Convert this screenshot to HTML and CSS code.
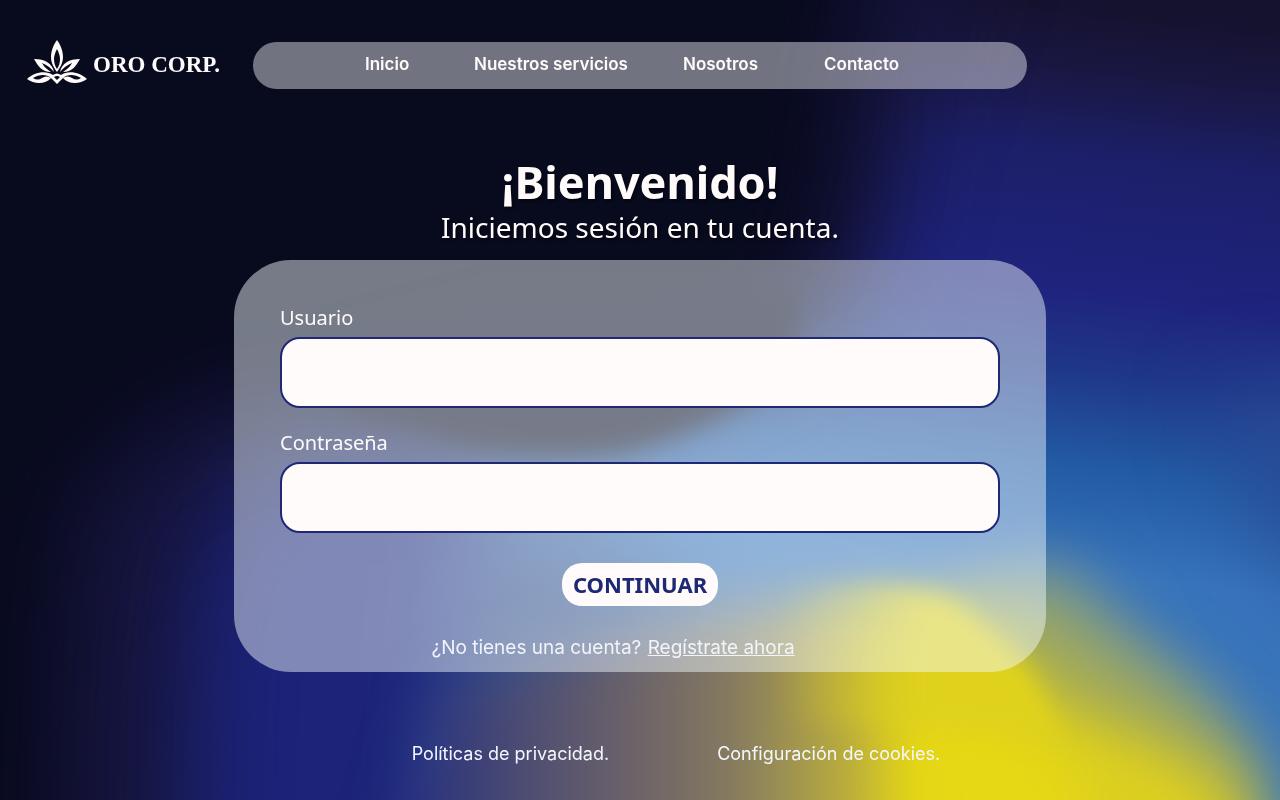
FILE: index.html
```html
<!DOCTYPE html>
<html lang="es">
<head>
<meta charset="utf-8">
<meta name="viewport" content="width=device-width, initial-scale=1">
<title>Oro Corp. – Iniciar sesión</title>
<link rel="stylesheet" href="styles.css">
</head>
<body>
<svg class="backdrop" viewBox="0 0 1280 800" preserveAspectRatio="none" aria-hidden="true">
  <defs>
    <filter id="soft" filterUnits="userSpaceOnUse" x="-300" y="-300" width="1900" height="1400" color-interpolation-filters="sRGB"><feGaussianBlur stdDeviation="12"/></filter>
    <filter id="softer" filterUnits="userSpaceOnUse" x="-300" y="-300" width="1900" height="1400" color-interpolation-filters="sRGB"><feGaussianBlur stdDeviation="28"/></filter>
    <filter id="softest" filterUnits="userSpaceOnUse" x="-300" y="-300" width="1900" height="1400" color-interpolation-filters="sRGB"><feGaussianBlur stdDeviation="46"/></filter>
    <linearGradient id="sky" gradientUnits="userSpaceOnUse" x1="1030" y1="0" x2="940" y2="800">
      <stop offset="0" stop-color="#15122f"/>
      <stop offset=".08" stop-color="#191742"/>
      <stop offset=".18" stop-color="#1c1f68"/>
      <stop offset=".35" stop-color="#1f237d"/>
      <stop offset=".45" stop-color="#1f3788"/>
      <stop offset=".57" stop-color="#235ba4"/>
      <stop offset=".7" stop-color="#3874bc"/>
      <stop offset="1" stop-color="#3a76ba"/>
    </linearGradient>
    <linearGradient id="glow" gradientUnits="userSpaceOnUse" x1="400" y1="0" x2="940" y2="0">
      <stop offset="0" stop-color="#23287b"/>
      <stop offset=".2" stop-color="#484a74"/>
      <stop offset=".42" stop-color="#6b6169"/>
      <stop offset=".62" stop-color="#857a60"/>
      <stop offset=".82" stop-color="#b8ab40"/>
      <stop offset="1" stop-color="#e8d912"/>
    </linearGradient>
    <linearGradient id="rim" gradientUnits="userSpaceOnUse" x1="1140" y1="600" x2="1050" y2="740">
      <stop offset="0" stop-color="#6f94a0"/>
      <stop offset=".5" stop-color="#9ca660"/>
      <stop offset="1" stop-color="#d8cb24"/>
    </linearGradient>
    <linearGradient id="crest" gradientUnits="userSpaceOnUse" x1="780" y1="0" x2="930" y2="0">
      <stop offset="0" stop-color="#c8ba34" stop-opacity="0"/>
      <stop offset="1" stop-color="#e0d21c"/>
    </linearGradient>
  </defs>
  <rect width="1280" height="800" fill="url(#sky)"/>
  <path filter="url(#softest)" fill="#2b4a96" d="M1220 400H1400V600L1300 570Z"/>
  <path filter="url(#softest)" fill="#2f4c88" d="M430 500L600 530L700 600L560 720L400 700Z"/>
  <path filter="url(#softest)" fill="#1c2378" d="M-100 420H480L470 560L440 950H-100Z"/>
  <path filter="url(#softer)" fill="url(#glow)" d="M380 900L440 690Q580 640 720 610Q820 596 990 604V900Z"/>
  <path filter="url(#softer)" fill="url(#rim)" d="M960 590L1060 560L1130 624L1210 690L1264 760L1280 900H960Z"/>
  <path filter="url(#softer)" fill="#ddcf20" d="M1020 730L1130 750L1210 790V900H1000Z"/>
  <path filter="url(#softer)" fill="#e6d814" d="M910 900L900 650Q960 630 1000 680L1080 780V900Z"/>
  <path filter="url(#soft)" fill="url(#crest)" d="M780 720V592Q900 572 956 604Q1000 634 1034 680L1060 740Z"/>
  <path filter="url(#softest)" fill="#16153e" d="M-200 -200H1020Q910 60 890 180Q880 290 800 340L620 420Q480 455 330 455Q240 470 210 550Q180 660 190 950H-200Z"/>
  <path filter="url(#softest)" fill="#080a1e" d="M-200 -200H900Q850 60 840 180Q830 280 780 330L600 400Q400 400 250 390Q110 440 80 520Q60 640 60 950H-200Z"/>
  <path filter="url(#soft)" fill="#0a0b20" d="M340 330L500 290H795Q805 340 770 385Q710 430 620 452Q540 460 460 444Q400 424 340 410Z"/>
</svg>

<div class="page">
  <header class="header">
    <a class="brand" href="#">
      <svg class="brand-mark" viewBox="0 0 62 46" aria-hidden="true">
        <g fill="#fffbfb" fill-rule="evenodd">
          <path d="M31 0C26 7 25 13 25 17C25 23 28 28 31 32C34 28 37 23 37 17C37 13 36 7 31 0ZM31 9C33 13 34 16 34 19C34 23 33 26 31 29C29 26 28 23 28 19C28 16 29 13 31 9Z"/>
          <path d="M8 19C19 19 26 23 28 32C25 28 21 25 16 23C18 27 21 29 25 32C16 32 12 26 8 19ZM54 19C43 19 36 23 34 32C37 28 41 25 46 23C44 27 41 29 37 32C46 32 50 26 54 19Z"/>
          <path d="M1 39C8 32 20 30 27 35Q31 32 35 35C42 30 54 32 61 39C53 45 42 44 37 38C40 36 43 36 46 38C49 40 52 40 55 38C49 34 41 34 37 38L31 44L25 38C21 34 13 34 7 38C10 40 13 40 16 38C19 36 22 36 25 38C20 44 9 45 1 39ZM28 37L31 40L34 37Q31 35 28 37Z"/>
        </g>
      </svg>
      <span class="brand-name">ORO CORP.</span>
    </a>
    <nav class="nav" aria-label="Principal">
      <a href="#">Inicio</a>
      <a href="#">Nuestros servicios</a>
      <a href="#">Nosotros</a>
      <a href="#">Contacto</a>
    </nav>
  </header>

  <main class="main">
    <h1 class="title">¡Bienvenido!</h1>
    <p class="subtitle">Iniciemos sesión en tu cuenta.</p>
    <form class="card">
      <label class="label" for="user">Usuario</label>
      <input class="field" id="user" type="text">
      <label class="label" for="pass">Contraseña</label>
      <input class="field" id="pass" type="password">
      <button class="submit" type="button">CONTINUAR</button>
      <p class="signup">¿No tienes una cuenta? <a href="#">Regístrate ahora</a></p>
    </form>
  </main>

  <footer class="footer">
    <a href="#">Políticas de privacidad.</a>
    <a href="#">Configuración de cookies.</a>
  </footer>
</div>
</body>
</html>
```
FILE: styles.css
```css
* {
  box-sizing: border-box;
}

body {
  margin: 0;
  background: #080a1e;
  color: #fffbfb;
  font-family: "Noto Sans", "Open Sans", sans-serif;
}

a {
  color: inherit;
  text-decoration: none;
}

.backdrop {
  position: fixed;
  inset: 0;
  z-index: -1;
  width: 100%;
  height: 100%;
}

.page {
  display: flex;
  flex-direction: column;
  min-height: 100vh;
}

.header {
  display: grid;
  grid-template-columns: 1fr minmax(0, 774px) 1fr;
  align-items: center;
  padding-top: 40px;
}

.brand {
  display: flex;
  align-items: center;
  gap: 5px;
  padding: 0 0 4px 26px;
}

.brand-mark {
  flex: none;
  width: 62px;
  height: 46px;
}

.brand-name {
  padding-top: 4px;
  font: bold 23px/32px "Liberation Serif", serif;
  white-space: nowrap;
}

.nav {
  display: grid;
  grid-template-columns: 109px 209px 141px auto;
  padding: 10px 0 13px 112px;
  border-radius: 24px;
  background: rgba(251, 251, 255, 0.44);
  font: 600 17px/24px Inter, sans-serif;
  white-space: nowrap;
}

.main {
  display: flex;
  flex-direction: column;
  align-items: center;
  padding: 63px 24px 0;
}

.title {
  margin: 0;
  font-size: 45px;
  line-height: 58px;
  text-shadow: 2px 2px 3px rgba(0, 0, 0, 0.5);
}

.subtitle {
  margin: 0;
  font-size: 28px;
  line-height: 32px;
  text-shadow: 2px 2px 3px rgba(0, 0, 0, 0.5);
}

.card {
  display: flex;
  flex-direction: column;
  width: 100%;
  max-width: 812px;
  margin-top: 17px;
  padding: 44px 46px 10px;
  border-radius: 57px;
  background: rgba(243, 250, 255, 0.47);
}

.label {
  padding-bottom: 5px;
  font-size: 20px;
  line-height: 28px;
}

.field {
  width: 100%;
  height: 71px;
  margin-bottom: 21px;
  padding: 0 20px;
  border: 2px solid #1f2875;
  border-radius: 20px;
  background: #fffbfb;
  font: inherit;
  font-size: 20px;
}

.submit {
  align-self: center;
  width: 156px;
  height: 43px;
  margin-top: 9px;
  padding: 0;
  border: 0;
  border-radius: 20px;
  background: #fffbfb;
  color: #1f2875;
  font: bold 22px/43px "Noto Sans", sans-serif;
}

.signup {
  margin: 28px 54px 0 0;
  color: #f1f4fa;
  font: 19px/28px Inter, sans-serif;
  text-align: center;
}

.signup a {
  margin-left: 1px;
  text-decoration: underline;
}

.footer {
  display: flex;
  justify-content: center;
  gap: 108px;
  padding: 68px 0 32px 72px;
  color: #f4f7ff;
  font: 18px/28px Inter, sans-serif;
}
```
